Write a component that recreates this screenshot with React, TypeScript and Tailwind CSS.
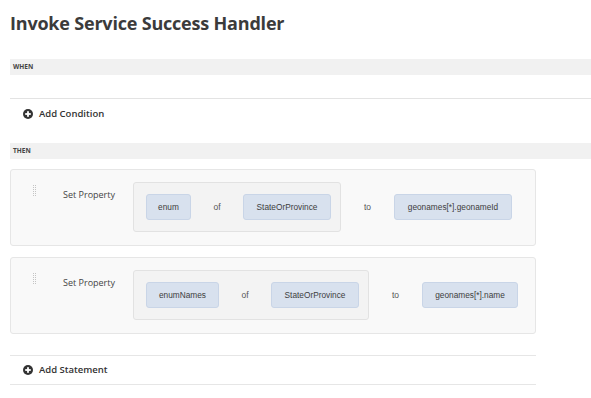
const font = { fontFamily: '"Open Sans", "Noto Sans", sans-serif' };
const arial = { fontFamily: '"Liberation Sans", Arial, sans-serif' };

const PlusIcon = () => (
  <svg width="10" height="10" viewBox="0 0 10 10">
    <circle cx="5" cy="5" r="5" fill="#333" />
    <rect x="2.2" y="4.1" width="5.6" height="1.8" fill="#fff" />
    <rect x="4.1" y="2.2" width="1.8" height="5.6" fill="#fff" />
  </svg>
);

const Handle = () => (
  <svg width="4" height="11" viewBox="0 0 4 11">
    {[0, 2, 4, 6, 8, 10].map((y) => (
      <g key={y}>
        <rect x="0" y={y} width="1" height="1" fill="#c4c4c4" />
        <rect x="2" y={y} width="1" height="1" fill="#c4c4c4" />
      </g>
    ))}
  </svg>
);

const Chip = ({ text, width }: { text: string; width: string }) => (
  <div
    className={`${width} h-[26px] flex items-center justify-center rounded-[3px] border border-[#c9d5e7] bg-[#d8e1ee] text-[8.3px] text-[#3d3d3d]`}
    style={arial}
  >
    {text}
  </div>
);

const Word = ({ text, width }: { text: string; width: string }) => (
  <div className={`${width} text-center text-[8.5px] text-[#555]`} style={arial}>
    {text}
  </div>
);

type Stmt = { prop: string; propW: string; obj: string; value: string; valueW: string };

const Statement = ({ s }: { s: Stmt }) => (
  <div className="ml-[10px] w-[526px] h-[77px] flex items-start rounded-[3px] border border-[#e6e6e6] bg-[#f9f9f9]">
    <div className="ml-[22px] mt-[15px]">
      <Handle />
    </div>
    <div className="ml-[26px] mt-[18px] w-[70px] text-[9px] text-[#444]">Set Property</div>
    <div className="mt-[12px] h-[50px] flex items-center rounded-[3px] border border-[#e2e2e2] bg-[#f3f3f3] pl-[12px] pr-[9px]">
      <Chip text={s.prop} width={s.propW} />
      <Word text="of" width="w-[52px]" />
      <Chip text={s.obj} width="w-[88px]" />
    </div>
    <div className="mt-[12px] h-[50px] flex items-center">
      <Word text="to" width="w-[53px]" />
      <Chip text={s.value} width={s.valueW} />
    </div>
  </div>
);

const AddRow = ({ label }: { label: string }) => (
  <div className="h-[28px] flex items-center pl-[23px] gap-[6px]">
    <PlusIcon />
    <span className="text-[9.5px] font-semibold text-[#333]">{label}</span>
  </div>
);

const SectionBar = ({ label }: { label: string }) => (
  <div className="ml-[10px] h-[16px] flex items-center bg-[#f1f1f1] pl-[3px] text-[6.5px] font-bold text-[#444]">
    {label}
  </div>
);

const rows: Stmt[] = [
  { prop: 'enum', propW: 'w-[45px]', obj: 'StateOrProvince', value: 'geonames[*].geonameId', valueW: 'w-[118px]' },
  { prop: 'enumNames', propW: 'w-[73px]', obj: 'StateOrProvince', value: 'geonames[*].name', valueW: 'w-[96px]' },
];

export default function App() {
  return (
    <div className="w-[591px] h-[398px] bg-white overflow-hidden" style={font}>
      <h1 className="pl-[10px] pt-[10px] h-[59px] text-[18px] leading-[26px] font-bold tracking-[-0.2px] text-[#3b3b3b]">
        Invoke Service Success Handler
      </h1>
      <SectionBar label="WHEN" />
      <div className="h-[23px]" />
      <div className="ml-[10px] border-t border-[#e3e3e3]">
        <div className="-ml-[10px] pt-[1px]">
          <AddRow label="Add Condition" />
        </div>
      </div>
      <div className="h-[15px]" />
      <SectionBar label="THEN" />
      <div className="h-[10px]" />
      <div className="flex flex-col gap-[11px]">
        {rows.map((s) => (
          <Statement key={s.prop} s={s} />
        ))}
      </div>
      <div className="h-[21px]" />
      <div className="ml-[10px] w-[526px] border-y border-[#e6e6e6]">
        <div className="-ml-[10px]">
          <AddRow label="Add Statement" />
        </div>
      </div>
    </div>
  );
}
